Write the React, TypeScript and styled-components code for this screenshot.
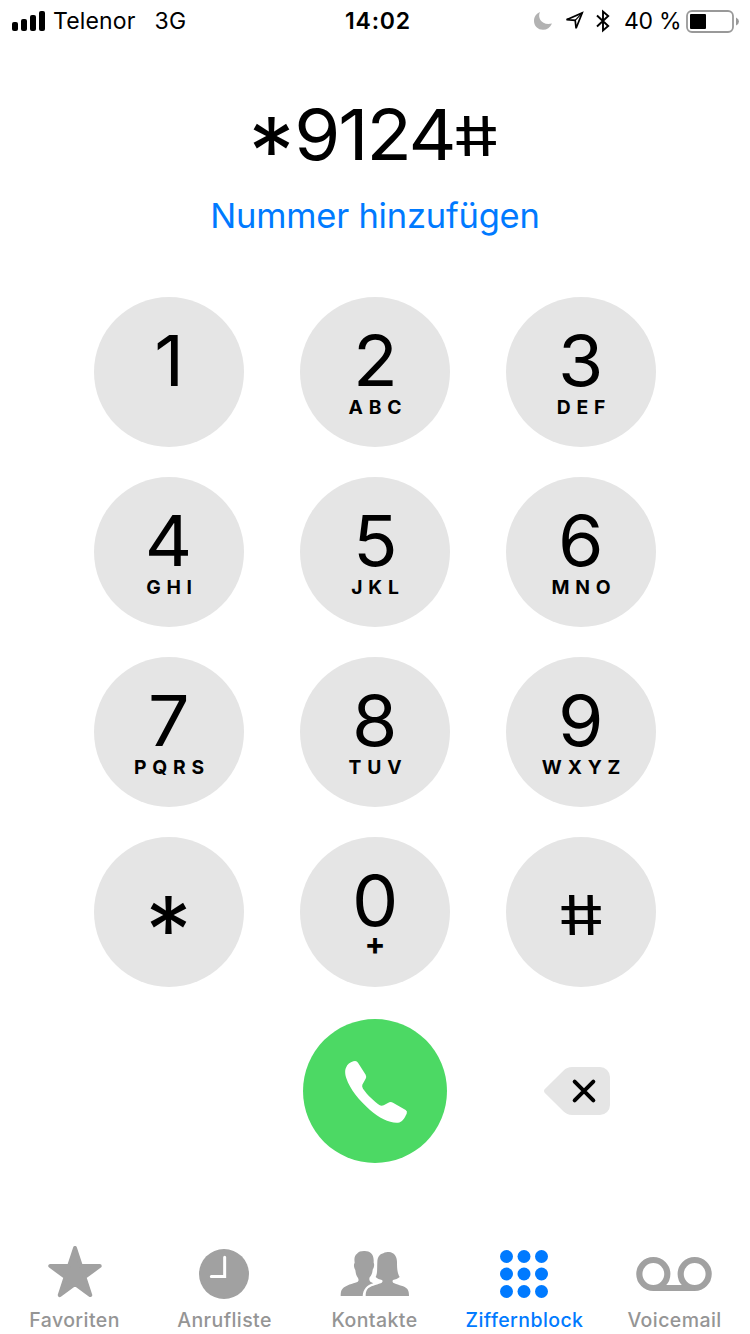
import React from 'react';
import styled, { createGlobalStyle } from 'styled-components';

const GlobalStyle = createGlobalStyle`
  body {
    margin: 0;
    background: #fff;
    color: #000;
    font-family: Inter, 'Liberation Sans', sans-serif;
  }
  button {
    border: 0;
    padding: 0;
    margin: 0;
    background: none;
    color: inherit;
    font: inherit;
  }
  svg { display: block; flex: none; }
`;

const Screen = styled.main`
  width: 750px;
  height: 1334px;
  display: flex;
  flex-direction: column;
  overflow: hidden;
`;

const StatusBar = styled.header`
  height: 40px;
  display: grid;
  grid-template-columns: 1fr auto 1fr;
  align-items: center;
  padding: 1px 11px 0 12px;
  box-sizing: border-box;
  font-size: 23px;
  line-height: 40px;
`;

const StatusGroup = styled.div<{ $end?: boolean }>`
  display: flex;
  align-items: center;
  justify-content: ${(p) => (p.$end ? 'flex-end' : 'flex-start')};
`;

const Signal = styled.div`
  display: flex;
  align-items: flex-end;
  gap: 3px;
  height: 20px;
  margin-right: 8px;
`;

const SignalBar = styled.i<{ $height: number }>`
  width: 6px;
  height: ${(p) => p.$height}px;
  border-radius: 2px;
  background: #000;
`;

const StatusText = styled.span<{ $spacing: number; $gap?: number }>`
  letter-spacing: ${(p) => p.$spacing}px;
  margin-right: ${(p) => p.$gap ?? 0}px;
  white-space: nowrap;
`;

const StatusIcon = styled.span<{ $gap: number }>`
  margin-right: ${(p) => p.$gap}px;
`;

const Clock = styled.time`
  font-weight: 600;
  letter-spacing: 0.8px;
  padding-left: 5px;
`;

const Display = styled.section`
  height: 257px;
  padding-top: 53px;
  box-sizing: border-box;
  display: flex;
  flex-direction: column;
  align-items: center;
`;

const DialedNumber = styled.div`
  display: flex;
  padding-left: 2px;
  font-size: 70px;
  line-height: 84px;
  height: 84px;
  letter-spacing: -2px;
`;

const DialedDigits = styled.span`
  margin: 0 4.5px 0 9.5px;
  transform: scaleX(1.063);
`;

const AddNumber = styled.button`
  margin-top: 19px;
  color: #007aff;
  font-size: 34.5px;
  line-height: 40px;
  letter-spacing: -0.22px;
`;

const Star = styled.span`
  display: inline-block;
  letter-spacing: 0;
  transform: translateY(16.5px) scale(1.31, 1.33);
`;

const Hash = styled.span`
  display: inline-block;
  letter-spacing: 0;
  transform: translateY(1px) scale(1.03, 0.785) skewX(10deg);
`;

const Keypad = styled.section`
  display: grid;
  grid-template-columns: repeat(3, 150px);
  grid-auto-rows: 150px;
  gap: 30px 56px;
  justify-content: center;
`;

const Key = styled.button`
  display: flex;
  flex-direction: column;
  align-items: center;
  border-radius: 50%;
  background: #e5e5e5;
  padding-top: 29px;
`;

const Digit = styled.span<{ $symbol?: boolean }>`
  font-size: 70px;
  line-height: 70px;
  height: 70px;
  margin-top: ${(p) => (p.$symbol ? 13 : 0)}px;
  transform: ${(p) => (p.$symbol ? 'none' : 'scaleX(1.05)')};
`;

const Letters = styled.span<{ $plus?: boolean }>`
  margin-top: ${(p) => (p.$plus ? -2 : 1)}px;
  font-size: ${(p) => (p.$plus ? 31 : 19.3)}px;
  line-height: 20px;
  font-weight: 700;
  letter-spacing: ${(p) => (p.$plus ? 0 : 5.8)}px;
  padding-left: ${(p) => (p.$plus ? 0 : 6)}px;
`;

const Actions = styled.section`
  display: grid;
  grid-template-columns: repeat(3, 150px);
  gap: 56px;
  justify-content: center;
  align-items: center;
  justify-items: center;
  height: 144px;
  margin-top: 32px;
`;

const CallButton = styled.button`
  grid-column: 2;
  width: 144px;
  height: 144px;
  border-radius: 50%;
  background: #4cd964;
`;

const DeleteButton = styled.button`
  margin-right: 8px;
`;

const TabBar = styled.nav`
  display: grid;
  grid-template-columns: repeat(5, 150px);
  margin-top: auto;
  height: 104px;
`;

const Tab = styled.button<{ $active?: boolean }>`
  display: flex;
  flex-direction: column;
  align-items: center;
  color: ${(p) => (p.$active ? '#007aff' : '#a1a1a1')};
`;

const TabLabel = styled.span<{ $active?: boolean }>`
  margin-top: 8px;
  padding-right: 1px;
  color: ${(p) => (p.$active ? '#007aff' : '#959595')};
  font-size: 19.5px;
  line-height: 24px;
  font-weight: 500;
  letter-spacing: 0.42px;
`;

const keys: [string, string][] = [
  ['1', ''], ['2', 'ABC'], ['3', 'DEF'],
  ['4', 'GHI'], ['5', 'JKL'], ['6', 'MNO'],
  ['7', 'PQRS'], ['8', 'TUV'], ['9', 'WXYZ'],
  ['*', ''], ['0', '+'], ['#', ''],
];

const KeyGlyph = ({ value }: { value: string }) => {
  if (value === '*') return <Star>*</Star>;
  if (value === '#') return <Hash>#</Hash>;
  return <>{value}</>;
};

const MoonIcon = () => (
  <svg width="20" height="20" viewBox="0 0 20 20">
    <path d="M7 1C4 7 9 15 19 12.500C17 16.500 14 18.800 10 18.800C5 18.800 1 15 1 10C1 6 3.200 2.500 7 1Z" fill="#b2b2b2" />
  </svg>
);

const LocationIcon = () => (
  <svg width="20" height="20" viewBox="0 0 20 20">
    <path d="M17.200 1.900L11.100 17.300L10.200 9.400L1.500 8.700Z" fill="none" stroke="#000" strokeWidth="1.700" />
    <path d="M17.200 1.900L10.200 9.400" stroke="#000" strokeWidth="1.200" />
  </svg>
);

const BluetoothIcon = () => (
  <svg width="14" height="24" viewBox="0 0 14 24">
    <path d="M1 6.500L12.200 17L7 21.500V2.500L12.200 7L1 17.500" fill="none" stroke="#000" strokeWidth="1.900" />
  </svg>
);

const BatteryIcon = () => (
  <svg width="53" height="23" viewBox="0 0 53 23">
    <rect x="1" y="1" width="46" height="21" rx="5" fill="none" stroke="#999" strokeWidth="1.800" />
    <rect x="4" y="4" width="16" height="15" rx="1" fill="#000" />
    <path d="M50 7.500Q53 9 53 11.500T50 15.500Z" fill="#999" />
  </svg>
);

const PhoneIcon = () => (
  <svg width="144" height="144" viewBox="39 27 432 432">
    <path
      fill="#fff"
      d="M190 154Q200 151 204 158L227 194Q230 200 227 206L217 224Q215 229 219 236C232 255 252 273 268 285Q274 289 281 286L298 277Q303 275 309 278L347 300Q353 304 350 311C344 324 336 337 324 338C300 340 268 325 240 300C208 272 180 238 169 205C164 190 165 178 168 173C172 163 180 157 190 154Z"
    />
  </svg>
);

const DeleteIcon = () => (
  <svg width="66" height="48" viewBox="0 0 198 144">
    <path d="M2 67L58 11Q69 0 84 0H168A30 30 0 0 1 198 30V114A30 30 0 0 1 168 144H84Q69 144 58 133L2 77Q-2 72 2 67Z" fill="#e5e5e5" />
    <path d="M92 44L148 100M148 44L92 100" stroke="#000" strokeWidth="12" strokeLinecap="round" />
  </svg>
);

const TabIcon = ({ children }: { children: React.ReactNode }) => (
  <svg width="150" height="70" viewBox="0 0 450 210" fill="currentColor">
    {children}
  </svg>
);

const tabs = [
  {
    label: 'Favoriten',
    icon: (
      <path
        d="M225 54L242.500 107.900H299.200L253.300 141.200L270.800 195.100L225 161.800L179.200 195.100L196.700 141.200L150.800 107.900H207.500Z"
        stroke="currentColor"
        strokeWidth="12"
        strokeLinejoin="round"
      />
    ),
  },
  {
    label: 'Anrufliste',
    icon: (
      <>
        <circle cx="222" cy="132" r="75" />
        <path d="M224 82V139.500H184" fill="none" stroke="#fff" strokeWidth="9" strokeLinecap="round" />
      </>
    ),
  },
  {
    label: 'Kontakte',
    icon: (
      <>
        <path d="M192 63C208 62 221 71 221 90V98C224 103 222 114 218 119C217 130 214 137 209 142C207 148 208 152 211 155C214 157 217 158 220 160C200 165 190 178 188 198H122C122 188 123 181 127 177C137 165 160 161 170 157C176 154 177 150 174 144C169 138 167 130 166 120C162 114 160 103 164 98C162 84 164 76 171 71C175 65 183 63 192 63Z" />
        <path d="M250 70C255 66 262 66 267 66C282 67 291 79 291 96C291 115 292 130 299 141C294 146 286 149 279 150C276 154 278 158 283 160C296 166 314 168 322 177C326 182 327 190 327 198H197C197 190 198 184 202 178C210 168 229 165 242 160C248 157 249 153 246 150C239 149 231 146 227 141C233 130 231 114 232 96C232 82 238 73 250 70Z" />
      </>
    ),
  },
  {
    label: 'Ziffernblock',
    active: true,
    icon: [79.5, 132, 184.5].flatMap((y) =>
      [169.5, 222, 274.5].map((x) => <circle key={`${x}-${y}`} cx={x} cy={y} r="19.5" />),
    ),
  },
  {
    label: 'Voicemail',
    icon: (
      <g fill="none" stroke="currentColor" strokeWidth="18.5">
        <circle cx="160" cy="132" r="42" />
        <circle cx="284" cy="132" r="42" />
        <path d="M160 174H284" />
      </g>
    ),
  },
];

export default function App() {
  return (
    <>
      <GlobalStyle />
      <Screen>
        <StatusBar>
          <StatusGroup>
            <Signal>
              {[9, 12, 16, 20].map((h) => <SignalBar key={h} $height={h} />)}
            </Signal>
            <StatusText $spacing={0.15} $gap={19}>Telenor</StatusText>
            <StatusText $spacing={0.3}>3G</StatusText>
          </StatusGroup>
          <Clock>14:02</Clock>
          <StatusGroup $end>
            <StatusIcon $gap={12}><MoonIcon /></StatusIcon>
            <StatusIcon $gap={11}><LocationIcon /></StatusIcon>
            <StatusIcon $gap={14}><BluetoothIcon /></StatusIcon>
            <StatusText $spacing={-0.2} $gap={4.5}>40 %</StatusText>
            <BatteryIcon />
          </StatusGroup>
        </StatusBar>
        <Display>
          <DialedNumber>
            <KeyGlyph value="*" />
            <DialedDigits>9124</DialedDigits>
            <KeyGlyph value="#" />
          </DialedNumber>
          <AddNumber>Nummer hinzufügen</AddNumber>
        </Display>
        <Keypad>
          {keys.map(([digit, letters]) => (
            <Key key={digit}>
              <Digit $symbol={digit === '*' || digit === '#'}><KeyGlyph value={digit} /></Digit>
              {letters && <Letters $plus={letters === '+'}>{letters}</Letters>}
            </Key>
          ))}
        </Keypad>
        <Actions>
          <CallButton aria-label="Anrufen"><PhoneIcon /></CallButton>
          <DeleteButton aria-label="Löschen"><DeleteIcon /></DeleteButton>
        </Actions>
        <TabBar>
          {tabs.map((t) => (
            <Tab key={t.label} $active={t.active}>
              <TabIcon>{t.icon}</TabIcon>
              <TabLabel $active={t.active}>{t.label}</TabLabel>
            </Tab>
          ))}
        </TabBar>
      </Screen>
    </>
  );
}
